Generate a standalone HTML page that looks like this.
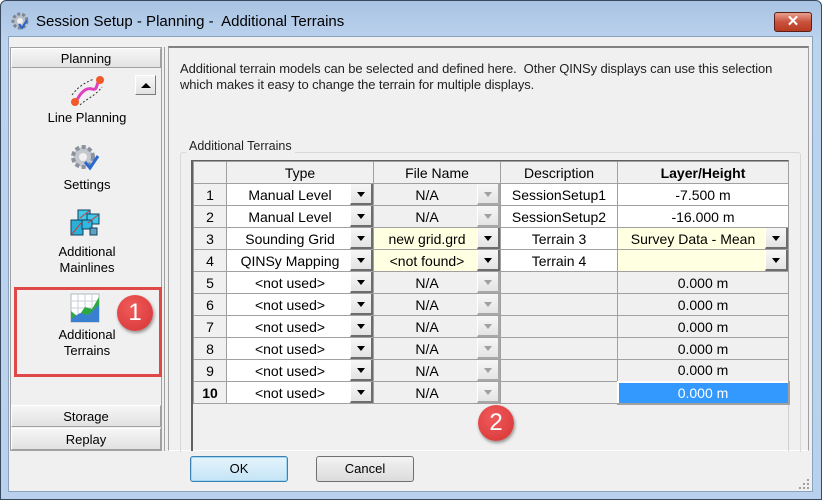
<!DOCTYPE html>
<html><head><meta charset="utf-8"><style>
*{box-sizing:border-box;margin:0;padding:0}
body{width:822px;height:500px;overflow:hidden;font-family:"Liberation Sans",sans-serif;font-size:13px;color:#000;background:#fff}
.win{position:absolute;left:0;top:0;width:822px;height:500px;background:linear-gradient(#a8c3e2,#bcd3ee 40px,#b9d1ec);border:1px solid #3a4a5e;border-radius:6px 6px 0 0}
.client{position:absolute;left:8px;top:36px;width:805px;height:456px;background:#f0f0f0;border:1px solid #8ba2bd}
.abs{position:absolute}
.btn3d{background:linear-gradient(#f6f6f6,#e2e2e2);border:1px solid #fff;border-right-color:#696969;border-bottom-color:#696969}
table{border-collapse:collapse;table-layout:fixed}
td{border:1px solid #a0a0a0;height:22px;padding:0;text-align:center;position:relative;font-size:14px;white-space:nowrap;overflow:hidden}
td.n{background:#f0f0f0}
td.h{background:#f0f0f0}
td.g{background:#f0f0f0}
td.w{background:#fff}
td.y{background:#ffffe1}
.dd{position:absolute;right:0;top:0;width:23px;height:21px;background:linear-gradient(#f6f6f6,#e4e4e4);border-right:2px solid #6d6d6d;border-bottom:2px solid #6d6d6d;border-left:1px solid #fff}
.dd:after{content:"";position:absolute;left:6px;top:8px;border-left:4px solid transparent;border-right:4px solid transparent;border-top:5px solid #000}
.dd.dis:after{border-top-color:#a0a0a0}
.dd.dis{border-right-color:#a8a8a8;border-bottom-color:#a8a8a8}
.t{padding-right:20px}
.badge{position:absolute;width:36px;height:36px;border-radius:50%;background:radial-gradient(circle at 40% 35%,#f05a5a,#d63434);color:#fff;font-size:24px;text-align:center;line-height:36px;box-shadow:1px 2px 3px rgba(0,0,0,.4)}
.lbl{position:absolute;width:150px;text-align:center;font-size:13px;line-height:16px}
</style></head><body>
<div class="win">
 <svg class="abs" style="left:9px;top:10px" width="20" height="20" viewBox="0 0 20 20"><circle cx="10" cy="10" r="7" fill="#b8bec8" stroke="#7d8592" stroke-width="3" stroke-dasharray="3 2"/><circle cx="10" cy="10" r="3" fill="#eee"/><path d="M9 13l3 4 5-8" stroke="#2a62c8" stroke-width="2" fill="none"/></svg>
 <div class="abs" style="left:35px;top:12px;font-size:15px;color:#000">Session Setup - Planning -&nbsp; Additional Terrains</div>
 <div class="abs" style="left:773px;top:11px;width:38px;height:20px;border:1px solid #5a2018;border-radius:3px;background:linear-gradient(#e8a090,#c9523c 50%,#b83a22);color:#fff;font-weight:bold;text-align:center;line-height:18px;font-size:15px">✕</div>
</div>
<div class="client"></div>
<div class="abs" style="left:10px;top:47px;width:152px;height:404px;border:1px solid #a0a0a0;background:#f0f0f0"></div>
<div class="abs" style="left:164px;top:47px;width:1px;height:404px;background:#a0a0a0"></div>
<div class="abs btn3d" style="left:11px;top:48px;width:150px;height:20px;text-align:center;line-height:19px;border-color:#fff #a0a0a0 #a0a0a0 #fff">Planning</div>
<div class="abs btn3d" style="left:135px;top:75px;width:21px;height:20px;border-color:#fff #7a7a7a #7a7a7a #fff"><div style="position:absolute;left:5px;top:7px;border-left:5px solid transparent;border-right:5px solid transparent;border-bottom:5px solid #000"></div></div>
<svg class="abs" style="left:68px;top:75px" width="36" height="32"><path d="M8 27C12 18 18 12 24 14 30 16 28 8 32 4" stroke="#e040c0" stroke-width="3" fill="none"/><path d="M4 20C10 12 16 8 26 4M12 30C18 24 26 22 34 12" stroke="#333" stroke-dasharray="2 2" fill="none"/><circle cx="7" cy="27" r="4" fill="#f05a28"/><circle cx="32" cy="5" r="4" fill="#f05a28"/></svg>
<div class="lbl" style="left:12px;top:110px">Line Planning</div>
<svg class="abs" style="left:69px;top:142px" width="32" height="32"><circle cx="14" cy="15" r="10" fill="#c4c8ce" stroke="#8a929e" stroke-width="4" stroke-dasharray="4 2.5"/><circle cx="14" cy="15" r="4" fill="#f0f0f0"/><path d="M16 20l5 6 8-12" stroke="#2a6ad0" stroke-width="3" fill="none"/></svg>
<div class="lbl" style="left:12px;top:177px">Settings</div>
<svg class="abs" style="left:70px;top:208px" width="32" height="32"><rect x="1" y="12" width="12" height="15" fill="#2ab0d8" stroke="#104060"/><rect x="8" y="2" width="12" height="10" fill="#40c8e8" stroke="#104060"/><rect x="17" y="6" width="12" height="10" fill="#40c8e8" stroke="#104060"/><rect x="12" y="12" width="10" height="9" fill="#30b8e0" stroke="#104060"/><rect x="20" y="20" width="7" height="7" fill="#60a0c0" stroke="#104060"/><path d="M2 26L12 14M10 10L19 3M18 15L28 7" stroke="#c04040"/></svg>
<div class="lbl" style="left:12px;top:244px">Additional<br>Mainlines</div>
<div class="abs" style="left:14px;top:287px;width:148px;height:90px;border:3px solid #e04848"></div>
<svg class="abs" style="left:70px;top:293px" width="32" height="32"><rect x="1" y="1" width="28" height="28" fill="#fff" stroke="#b0b8c0"/><path d="M1 8h28M1 15h28M1 22h28M8 1v28M15 1v28M22 1v28" stroke="#c8d0d8"/><path d="M1 18L8 24 15 14 22 16 29 4V29H1Z" fill="#2ea840"/><path d="M1 26L10 20 18 22 29 12V29H1Z" fill="#3a80d0"/></svg>
<div class="badge" style="left:117px;top:295px">1</div>
<div class="lbl" style="left:12px;top:327px">Additional<br>Terrains</div>
<div class="abs btn3d" style="left:11px;top:405px;width:150px;height:22px;text-align:center;line-height:21px;border-color:#fff #a0a0a0 #a0a0a0 #fff">Storage</div>
<div class="abs btn3d" style="left:11px;top:428px;width:150px;height:22px;text-align:center;line-height:21px;border-color:#fff #a0a0a0 #a0a0a0 #fff">Replay</div>
<div class="abs" style="left:168px;top:46px;width:641px;height:405px;border:1px solid #a0a0a0;border-top:2px solid #808080;border-bottom:1px solid #fff"></div>
<div class="abs" style="left:180px;top:61px;width:625px;font-size:13px;line-height:16px;color:#222;letter-spacing:-0.1px">Additional terrain models can be selected and defined here.&nbsp; Other QINSy displays can use this selection which makes it easy to change the terrain for multiple displays.</div>
<div class="abs" style="left:180px;top:152px;width:621px;height:300px;border:1px solid #d8d8d8;border-bottom:none;border-radius:3px 3px 0 0"></div>
<div class="abs" style="left:186px;top:139px;padding:0 3px;background:#f0f0f0;font-size:12.5px;color:#222">Additional Terrains</div>
<div class="abs" style="left:191px;top:160px;width:598px;height:291px;border-left:2px solid #606060;border-top:2px solid #606060;border-right:1px solid #d0d0d0"></div>
<table class="abs" style="left:193px;top:161px;width:595px">
<colgroup><col style="width:33px"><col style="width:147px"><col style="width:127px"><col style="width:117px"><col style="width:171px"></colgroup>
<tr><td class="h"></td><td class="h">Type</td><td class="h">File Name</td><td class="h">Description</td><td class="h" style="font-weight:bold">Layer/Height</td></tr>
<tr><td class="n">1</td><td class="w"><span class="t">Manual Level</span><div class="dd"></div></td><td class="g"><span class="t">N/A</span><div class="dd dis"></div></td><td class="w">SessionSetup1</td><td class="w">-7.500 m</td></tr>
<tr><td class="n">2</td><td class="w"><span class="t">Manual Level</span><div class="dd"></div></td><td class="g"><span class="t">N/A</span><div class="dd dis"></div></td><td class="w">SessionSetup2</td><td class="w">-16.000 m</td></tr>
<tr><td class="n">3</td><td class="w"><span class="t">Sounding Grid</span><div class="dd"></div></td><td class="y"><span class="t">new grid.grd</span><div class="dd"></div></td><td class="w">Terrain 3</td><td class="y"><span class="t">Survey Data - Mean</span><div class="dd"></div></td></tr>
<tr><td class="n">4</td><td class="w"><span class="t">QINSy Mapping</span><div class="dd"></div></td><td class="y"><span class="t">&lt;not found&gt;</span><div class="dd"></div></td><td class="w">Terrain 4</td><td class="y"><div class="dd"></div></td></tr>
<tr><td class="n">5</td><td class="w"><span class="t">&lt;not used&gt;</span><div class="dd"></div></td><td class="g"><span class="t">N/A</span><div class="dd dis"></div></td><td class="g"></td><td class="g">0.000 m</td></tr>
<tr><td class="n">6</td><td class="w"><span class="t">&lt;not used&gt;</span><div class="dd"></div></td><td class="g"><span class="t">N/A</span><div class="dd dis"></div></td><td class="g"></td><td class="g">0.000 m</td></tr>
<tr><td class="n">7</td><td class="w"><span class="t">&lt;not used&gt;</span><div class="dd"></div></td><td class="g"><span class="t">N/A</span><div class="dd dis"></div></td><td class="g"></td><td class="g">0.000 m</td></tr>
<tr><td class="n">8</td><td class="w"><span class="t">&lt;not used&gt;</span><div class="dd"></div></td><td class="g"><span class="t">N/A</span><div class="dd dis"></div></td><td class="g"></td><td class="g">0.000 m</td></tr>
<tr><td class="n">9</td><td class="w"><span class="t">&lt;not used&gt;</span><div class="dd"></div></td><td class="g"><span class="t">N/A</span><div class="dd dis"></div></td><td class="g"></td><td class="g">0.000 m</td></tr>
<tr><td class="n" style="font-weight:bold">10</td><td class="w"><span class="t">&lt;not used&gt;</span><div class="dd"></div></td><td class="g"><span class="t">N/A</span><div class="dd dis"></div></td><td class="g"></td><td style="background:#3399ff;color:#fff;border:2px solid #fff;border-right-color:#a0a0a0;border-bottom-color:#a0a0a0">0.000 m</td></tr>
</table>
<div class="badge" style="left:478px;top:405px">2</div>
<div class="abs" style="left:190px;top:456px;width:98px;height:26px;border:1px solid #3c7fb1;border-radius:3px;background:linear-gradient(#e6f4fc,#c4e4f6);text-align:center;line-height:24px;box-shadow:inset 0 0 0 1px #9fd7f5">OK</div>
<div class="abs" style="left:316px;top:456px;width:98px;height:26px;border:1px solid #707070;border-radius:3px;background:linear-gradient(#f2f2f2,#dcdcdc);text-align:center;line-height:24px">Cancel</div>
<svg class="abs" style="left:798px;top:478px" width="12" height="12"><g fill="#a0a0a0"><rect x="9" y="1" width="2" height="2"/><rect x="5" y="5" width="2" height="2"/><rect x="9" y="5" width="2" height="2"/><rect x="1" y="9" width="2" height="2"/><rect x="5" y="9" width="2" height="2"/><rect x="9" y="9" width="2" height="2"/></g></svg>
</body></html>
